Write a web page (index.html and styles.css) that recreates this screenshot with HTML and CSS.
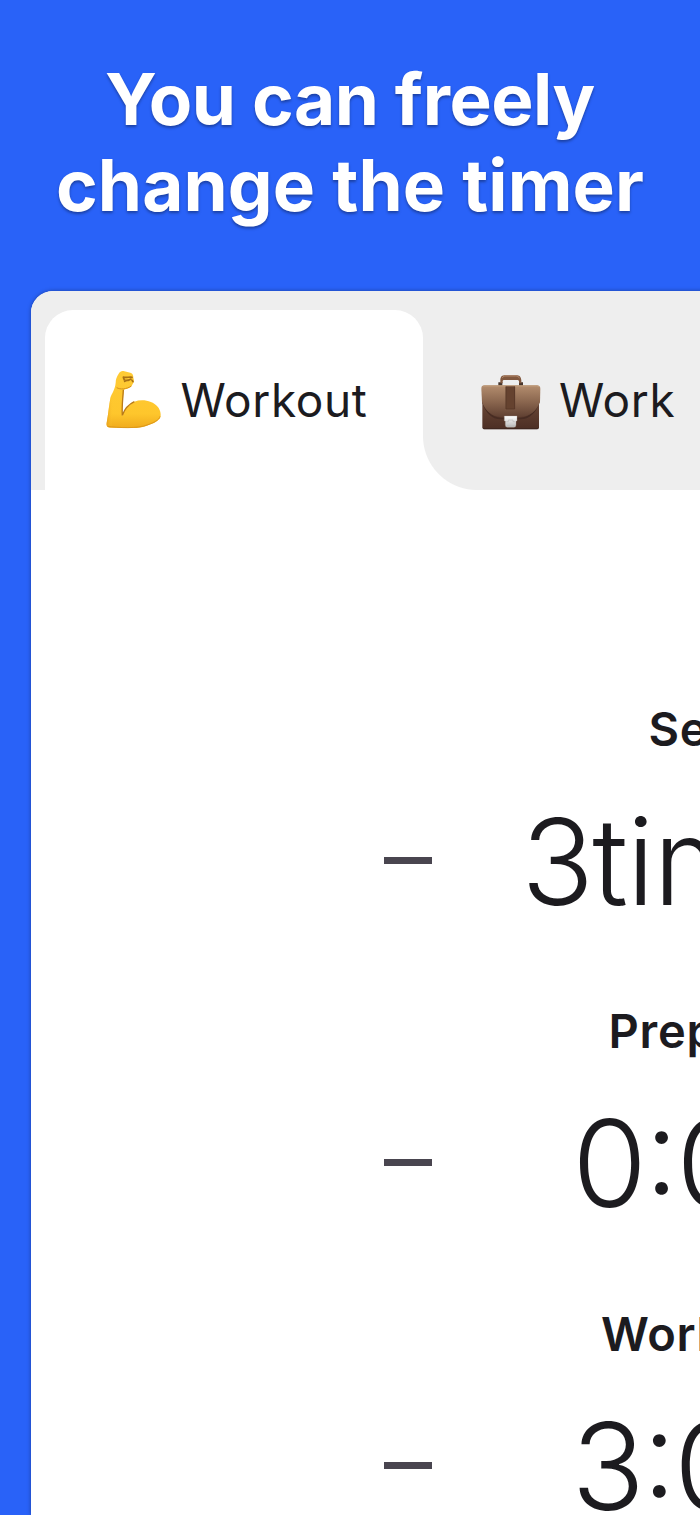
FILE: index.html
```html
<!DOCTYPE html>
<html lang="en">
<head>
  <meta charset="UTF-8" />
  <meta name="viewport" content="width=device-width, initial-scale=1" />
  <title>Interval timer</title>
  <link rel="stylesheet" href="styles.css">
</head>
<body>

<h1 class="headline"><span class="tight">You can freely</span><br>change the timer</h1>

<main class="card">
  <nav class="tabs">
    <div class="tab active">
      <svg class="tab-icon" viewBox="38 45 186 180" aria-hidden="true">
        <defs>
          <linearGradient id="skin" x1="0" y1="0" x2="0" y2="1">
            <stop offset="0" stop-color="#ffcb35" />
            <stop offset="0.75" stop-color="#fec62c" />
            <stop offset="1" stop-color="#f0ab1d" />
          </linearGradient>
          <linearGradient id="arm" x1="0" y1="0" x2="1" y2="0">
            <stop offset="0" stop-color="#e9a21d" />
            <stop offset="0.5" stop-color="#fdc52e" stop-opacity="0" />
          </linearGradient>
        </defs>
        <path fill="url(#skin)" d="M79 83 C79 73 82 65 88 56 C92 49 98 47 105 49 L123 53 C131 55 132 61 132 68 L134 76 C134 82 131 86 128 91 C126 98 115 102 104 104 C101 126 98 155 99 183 C105 164 118 148 135 140 C160 131 190 138 205 155 C214 165 217 183 211 191 C202 202 188 206 173 212 C160 218 140 220 116 219 L62 218 C53 217 51 213 52 204 C57 177 59 151 63 130 C66 116 77 106 79 83 Z" />
        <path fill="url(#arm)" d="M79 88 C78 110 66 116 63 130 C59 151 57 177 52 204 C51 214 55 217 62 217 L85 214 C70 200 67 172 76 142 L88 100 Z" />
        <path fill="none" stroke="#b97a18" stroke-width="4" d="M102 104 C101 126 97 155 99 181 C105 164 118 148 135 140" />
        <path fill="none" stroke="#d7921c" stroke-width="3" d="M82 98 C93 104 111 103 126 93" />
        <path fill="none" stroke="#a97114" stroke-width="5" stroke-linecap="round" d="M102 66 C110 70 121 64 128 67 M102 67 L105 75 L117 76 L125 72 M106 79 L116 75 M128 76 L131 80" />
        <path fill="none" stroke="#dc981b" stroke-width="3" d="M55 214 C85 218 145 222 176 209 C193 203 210 195 212 184" />
      </svg>
      <span class="tab-name">Workout</span>
    </div>
    <div class="tab">
      <svg class="tab-icon" viewBox="43 30 186 180" aria-hidden="true">
        <defs>
          <linearGradient id="bag" x1="0" y1="0" x2="0" y2="1">
            <stop offset="0" stop-color="#795440" />
            <stop offset="1" stop-color="#4c2e24" />
          </linearGradient>
          <linearGradient id="flap" x1="0" y1="0" x2="0" y2="1">
            <stop offset="0" stop-color="#b38d6e" />
            <stop offset="0.5" stop-color="#8c6850" />
            <stop offset="1" stop-color="#604032" />
          </linearGradient>
          <linearGradient id="clasp" x1="0" y1="0" x2="0" y2="1">
            <stop offset="0" stop-color="#ffffff" />
            <stop offset="1" stop-color="#b9b9b9" />
          </linearGradient>
        </defs>
        <path fill="#46352c" d="M98 67 H110 V77 H98 Z M160 67 H172 V77 H160 Z" />
        <path fill="#81583f" d="M104 70 V61 C104 50 109 46 119 46 H151 C161 46 166 50 167 61 V70 H160 V64 C160 61 157 60 153 60 H117 C113 60 111 61 111 64 V70 Z" />
        <path fill="none" stroke="#b38768" stroke-width="3" d="M110 54 C112 48 117 48 121 48 H149 C156 48 160 50 161 55" />
        <rect x="50" y="82" width="170" height="126" rx="6" fill="url(#bag)" />
        <path fill="#472c23" d="M50 123 C59 152 78 171 106 173 H164 C192 171 211 152 221 123 V128 C211 159 191 177 164 178 H106 C78 177 60 159 50 128 Z" />
        <path fill="url(#flap)" d="M47 86 C47 79 50 76 57 76 H214 C221 76 224 80 224 87 L223 126 C211 156 191 169 164 171 H106 C79 169 60 154 49 126 Z" />
        <path fill="none" stroke="#c19c7b" stroke-width="3" d="M51 80 Q53 78 58 78 H213 Q218 78 220 81" />
        <rect x="120" y="79" width="28" height="68" fill="#65422f" />
        <path stroke="#533425" stroke-width="2" d="M121 80 V147 H147 V80" fill="none" />
        <path fill="url(#clasp)" stroke="#a9a19c" d="M116 168 H154 V183 H151 V195 Q151 202 145 202 H125 Q119 202 119 195 V183 H116 Z" />
        <path fill="none" stroke="#bbb" stroke-width="2" d="M122 185 H128 V180 H142 V185 H148 M124 196 Q135 201 146 196" />
        <path stroke="#35221c" stroke-width="2" d="M52 206 H218" />
      </svg>
      <span class="tab-name">Work</span>
    </div>
  </nav>

  <section class="settings">
    <div class="setting">
      <h2 class="label">Sets</h2>
      <div class="stepper">
        <button class="minus" aria-label="Decrease sets"></button>
        <div class="value">3times</div>
      </div>
    </div>
    <div class="setting">
      <h2 class="label">Prepare</h2>
      <div class="stepper">
        <button class="minus" aria-label="Decrease prepare time"></button>
        <div class="value time">0:05</div>
      </div>
    </div>
    <div class="setting">
      <h2 class="label">Workout</h2>
      <div class="stepper">
        <button class="minus" aria-label="Decrease workout time"></button>
        <div class="value time">3:00</div>
      </div>
    </div>
  </section>
</main>

</body>
</html>
```

FILE: styles.css
```css
* {
  box-sizing: border-box;
}
html {
  overflow: hidden;
}
body {
  margin: 0;
  height: 1515px;
  overflow: hidden;
  background: #2962f8;
  color: #1c1b1f;
  font-family: Inter, "Liberation Sans", sans-serif;
}
.headline {
  margin: 0;
  padding-top: 56px;
  height: 290.5px;
  color: #fff;
  font-size: 71px;
  line-height: 86px;
  font-weight: 700;
  letter-spacing: 0.13px;
  text-align: center;
  text-shadow: 0 2px 3px rgba(0, 0, 0, 0.35);
}
.headline .tight {
  letter-spacing: -0.45px;
}
.card {
  margin-left: 31px;
  width: 1338px;
  height: 1224.5px;
  background: #fff;
  border-radius: 22px 22px 0 0;
  box-shadow: 0 0 4px rgba(0, 0, 0, 0.35);
  overflow: hidden;
}
.tabs {
  display: flex;
  height: 199px;
  padding: 19px 0 0 13.5px;
  background: #eee;
}
.tab {
  display: flex;
  align-items: center;
  gap: 17px;
  width: 378.5px;
  padding-left: 57px;
}
.tab.active {
  position: relative;
  background: #fff;
  border-radius: 28px 28px 0 0;
}
.tab.active::after {
  content: "";
  position: absolute;
  left: 100%;
  bottom: 0;
  width: 54px;
  height: 54px;
  background: radial-gradient(circle at 100% 0, transparent 53.5px, #fff 54.5px);
}
.tab-icon {
  width: 62px;
  height: 60px;
  flex: none;
}
.tab-name {
  font-size: 46px;
  line-height: 56px;
  letter-spacing: 0.6px;
}
.settings {
  padding-top: 210px;
}
.setting {
  height: 302.5px;
}
.label {
  margin: 0;
  font-size: 47px;
  line-height: 57px;
  font-weight: 600;
  letter-spacing: 0.7px;
  text-align: center;
}
.stepper {
  display: grid;
  grid-template-columns: 352.5px 1fr 352.5px;
  padding-top: 30px;
}
.minus {
  align-self: center;
  justify-self: end;
  grid-column: 1;
  width: 48px;
  height: 7px;
  margin-right: -48px;
  padding: 0;
  border: none;
  background: #49454f;
}
.value {
  grid-column: 2;
  padding: 2px 0 0 6px;
  font-size: 120px;
  line-height: 145px;
  font-weight: 300;
  letter-spacing: -1.5px;
  text-align: center;
}
/* keep the colon raised between the digits */
.value.time {
  padding: 2px 10px 0 0;
  font-size: 121px;
  letter-spacing: -2.5px;
  font-feature-settings: "calt" 1;
}
```
